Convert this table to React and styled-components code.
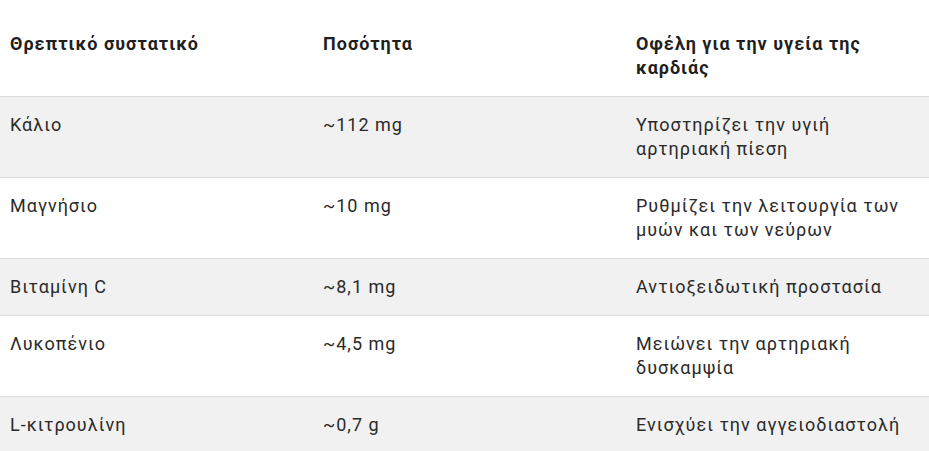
import styled, { createGlobalStyle } from "styled-components";

const GlobalStyle = createGlobalStyle`
  body {
    margin: 0;
    background: #fff;
    font-family: Roboto, "Liberation Sans", Arial, sans-serif;
  }
`;

const rows = [
  ["Κάλιο", "~112 mg", "Υποστηρίζει την υγιή αρτηριακή πίεση"],
  ["Μαγνήσιο", "~10 mg", "Ρυθμίζει την λειτουργία των μυών και των νεύρων"],
  ["Βιταμίνη C", "~8,1 mg", "Αντιοξειδωτική προστασία"],
  ["Λυκοπένιο", "~4,5 mg", "Μειώνει την αρτηριακή δυσκαμψία"],
  ["L-κιτρουλίνη", "~0,7 g", "Ενισχύει την αγγειοδιαστολή"],
];

const NutrientTable = () => {
  return (
    <Table>
      <Row>
        <HeadCell>Θρεπτικό συστατικό</HeadCell>
        <HeadCell>Ποσότητα</HeadCell>
        <HeadCell>Οφέλη για την υγεία της καρδιάς</HeadCell>
      </Row>
      {rows.map((r, i) => (
        <Row key={r[0]} $striped={i % 2 === 0}>
          <Cell>{r[0]}</Cell>
          <Cell>{r[1]}</Cell>
          <Cell>{r[2]}</Cell>
        </Row>
      ))}
    </Table>
  );
};

const Table = styled.div`
  margin-top: 16px;
  width: 100%;
  font-size: 18px;
  line-height: 24px;
  letter-spacing: 1px;
`;

const Row = styled.div`
  display: grid;
  grid-template-columns: 313px 313px 1fr;
  background: ${(p) => (p.$striped ? "#f1f1f1" : "#fff")};
  border-bottom: 1px solid #dcdcdc;
`;

const Cell = styled.div`
  padding: 16px 10px;
  color: #2a2a2a;
`;

const HeadCell = styled(Cell)`
  font-weight: 700;
  color: #1f1f1f;
`;

export default function App() {
  return (
    <>
      <GlobalStyle />
      <NutrientTable />
    </>
  );
}
